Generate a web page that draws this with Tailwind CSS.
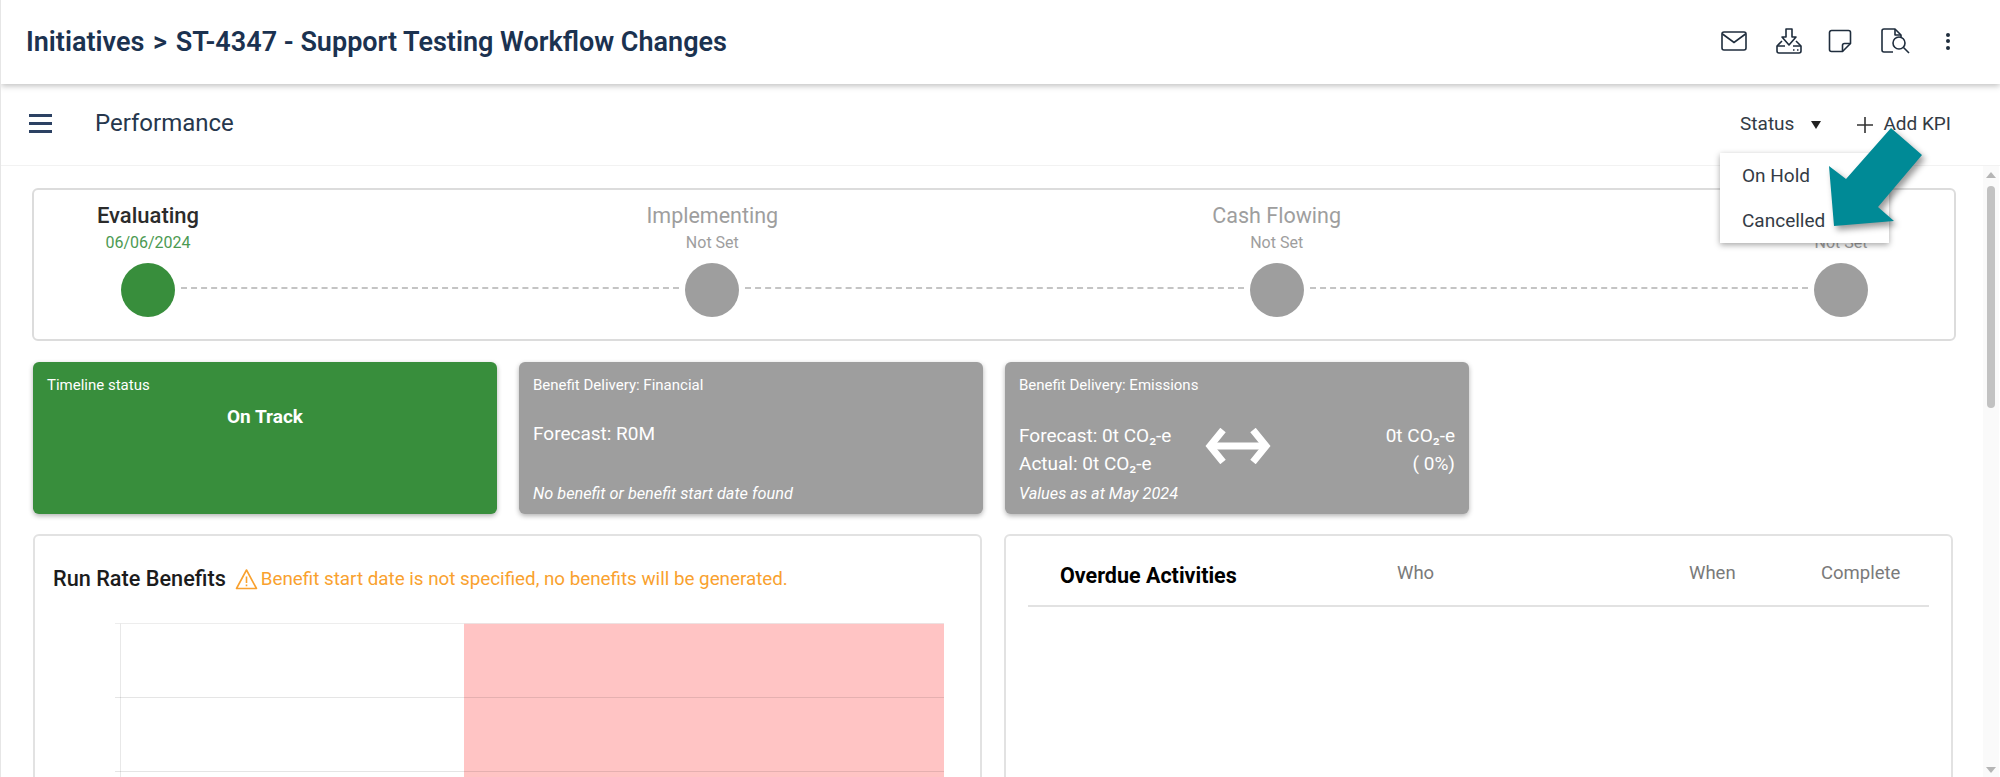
<!DOCTYPE html>
<html>
<head>
<meta charset="utf-8">
<script src="https://cdn.jsdelivr.net/npm/@tailwindcss/browser@4"></script>
</head>
<body class="bg-white overflow-hidden font-['Roboto',sans-serif]">
<div class="relative w-[2000px] h-[777px] overflow-hidden flex flex-col border-l border-[#e6e6e6]">
  <!-- header -->
  <header class="h-[84px] shrink-0 bg-white flex items-center justify-between pl-[25px] pr-[50px] shadow-[0_2px_6px_rgba(0,0,0,0.25)] relative z-10">
    <h1 class="text-[27px] font-semibold text-[#1b3250] mt-[1px]">Initiatives <span class="mx-[2px]">&gt;</span> ST-4347 - Support Testing Workflow Changes</h1>
    <div class="flex items-center text-[#1f2d3d] mb-[2px]">
      <svg class="w-[26px] h-[20px] mr-[28px]" viewBox="0 0 26 20" fill="none" stroke="currentColor" stroke-width="1.6"><rect x="1" y="1" width="24" height="18" rx="2"/><path d="M1.5 3 13 11.5 24.5 3"/></svg>
      <svg class="w-[28px] h-[26px] mr-[25px]" viewBox="0 0 28 26" fill="none" stroke="currentColor" stroke-width="1.6" stroke-linejoin="round"><path d="M11 1h6v8h4l-7 8-7-8h4z"/><path d="M7 13 2 18v5a2 2 0 0 0 2 2h20a2 2 0 0 0 2-2v-5l-5-5"/><path d="M2 18h8M18 18h8"/><path d="M18 22h1.5M22 22h1.5"/></svg>
      <svg class="w-[24px] h-[24px] mr-[29px]" viewBox="0 0 24 24" fill="none" stroke="currentColor" stroke-width="1.6" stroke-linejoin="round"><path d="M3.5 1.5h17a2 2 0 0 1 2 2v11l-8 8h-11a2 2 0 0 1-2-2v-17a2 2 0 0 1 2-2z"/><path d="M22.5 14.5h-6a2 2 0 0 0-2 2v6"/></svg>
      <svg class="w-[29px] h-[26px] mr-[36px]" viewBox="0 0 29 26" fill="none" stroke="currentColor" stroke-width="1.6" stroke-linejoin="round"><path d="M12 24H3a2 2 0 0 1-2-2V3a2 2 0 0 1 2-2h11l6 6v2"/><path d="M14 1v6h6"/><circle cx="18" cy="15" r="6"/><path d="m22.5 19.5 5.5 5.5"/></svg>
      <div class="flex flex-col gap-[2.5px]"><span class="w-[4px] h-[4px] rounded-full bg-[#1f2d3d]"></span><span class="w-[4px] h-[4px] rounded-full bg-[#1f2d3d]"></span><span class="w-[4px] h-[4px] rounded-full bg-[#1f2d3d]"></span></div>
    </div>
  </header>

  <!-- sub header -->
  <div class="h-[82px] shrink-0 flex items-center justify-between pl-[28px] pr-[49px] border-b border-[#f2f2f2] bg-white">
    <div class="flex items-center">
      <div class="w-[23px] flex flex-col gap-[5px] mb-[3px]"><span class="h-[3px] bg-[#2c4163]"></span><span class="h-[3px] bg-[#2c4163]"></span><span class="h-[3px] bg-[#2c4163]"></span></div>
      <span class="ml-[43px] text-[24px] text-[#26374d] mb-[4px]">Performance</span>
    </div>
    <div class="flex items-center text-[19px] text-[#333b45]">
      <span>Status</span>
      <span class="ml-[17px] w-0 h-0 border-x-[5.5px] border-x-transparent border-t-[8px] border-t-[#222]"></span>
      <svg class="ml-[36px] w-[16px] h-[16px]" viewBox="0 0 16 16" stroke="#333" stroke-width="1.6"><path d="M8 0v16M0 8h16"/></svg>
      <span class="ml-[10px]">Add KPI</span>
    </div>
  </div>

  <!-- body -->
  <div class="flex-1 flex min-h-0">
    <main class="flex-1 min-w-0 pl-[31px] pr-[27px] pt-[22px] overflow-hidden flex flex-col">
      <!-- stepper -->
      <section class="h-[153px] shrink-0 rounded-[6px] border-2 border-[#dcdcdc] pl-[87px] pr-[86px] pt-[14px] flex items-start bg-white">
        <div class="w-[54px] flex flex-col items-center whitespace-nowrap">
          <div class="h-[24px] leading-[24px] text-[22px] font-medium text-[#2b2b2b]">Evaluating</div>
          <div class="mt-[6px] h-[18px] leading-[18px] text-[16px] text-[#4c9a52]">06/06/2024</div>
          <div class="mt-[11px] w-[54px] h-[54px] rounded-full bg-[#388e3c]"></div>
        </div>
        <div class="flex-1 mt-[83px] mx-[6px] border-t-2 border-dashed border-[#c4c4c4]"></div>
        <div class="w-[54px] flex flex-col items-center whitespace-nowrap">
          <div class="h-[24px] leading-[24px] text-[21.5px] text-[#9e9e9e]">Implementing</div>
          <div class="mt-[6px] h-[18px] leading-[18px] text-[16px] text-[#9e9e9e]">Not Set</div>
          <div class="mt-[11px] w-[54px] h-[54px] rounded-full bg-[#9e9e9e]"></div>
        </div>
        <div class="flex-1 mt-[83px] mx-[6px] border-t-2 border-dashed border-[#c4c4c4]"></div>
        <div class="w-[54px] flex flex-col items-center whitespace-nowrap">
          <div class="h-[24px] leading-[24px] text-[21.5px] text-[#9e9e9e]">Cash Flowing</div>
          <div class="mt-[6px] h-[18px] leading-[18px] text-[16px] text-[#9e9e9e]">Not Set</div>
          <div class="mt-[11px] w-[54px] h-[54px] rounded-full bg-[#9e9e9e]"></div>
        </div>
        <div class="flex-1 mt-[83px] mx-[6px] border-t-2 border-dashed border-[#c4c4c4]"></div>
        <div class="w-[54px] flex flex-col items-center whitespace-nowrap">
          <div class="h-[24px]"></div>
          <div class="mt-[6px] h-[18px] leading-[18px] text-[16px] text-[#9e9e9e]">Not Set</div>
          <div class="mt-[11px] w-[54px] h-[54px] rounded-full bg-[#9e9e9e]"></div>
        </div>
      </section>

      <!-- status cards -->
      <div class="mt-[21px] ml-[1px] shrink-0 flex gap-[22px] text-white">
        <div class="w-[464px] h-[152px] rounded-[6px] bg-[#388e3c] shadow-[0_2px_5px_rgba(0,0,0,0.3)] px-[14px] pt-[14px]">
          <div class="text-[15px] leading-[18px]">Timeline status</div>
          <div class="mt-[11px] text-center text-[19px] leading-[24px] font-bold">On Track</div>
        </div>
        <div class="w-[464px] h-[152px] rounded-[6px] bg-[#9e9e9e] shadow-[0_2px_5px_rgba(0,0,0,0.3)] px-[14px] pt-[14px] flex flex-col">
          <div class="text-[15px] leading-[18px]">Benefit Delivery: Financial</div>
          <div class="mt-[28px] text-[19px] leading-[24px]">Forecast: R0M</div>
          <div class="mt-auto mb-[11px] text-[16.3px] leading-[18px] italic">No benefit or benefit start date found</div>
        </div>
        <div class="w-[464px] h-[152px] rounded-[6px] bg-[#9e9e9e] shadow-[0_2px_5px_rgba(0,0,0,0.3)] px-[14px] pt-[14px] flex flex-col">
          <div class="text-[15px] leading-[18px]">Benefit Delivery: Emissions</div>
          <div class="mt-[28px] flex items-center">
            <div class="w-[186px] text-[19px] leading-[28px]">
              <div>Forecast: 0t CO₂-e</div>
              <div>Actual: 0t CO₂-e</div>
            </div>
            <svg class="w-[66px] h-[36px] mb-[8px]" viewBox="0 0 66 36" fill="none" stroke="#fff" stroke-width="7"><path d="M5 18h56"/><path d="M18 2 5 18l13 16M48 2l13 16-13 16"/></svg>
            <div class="flex-1 text-right text-[19px] leading-[28px]">
              <div>0t CO₂-e</div>
              <div>( 0%)</div>
            </div>
          </div>
          <div class="mt-auto mb-[11px] text-[16.3px] leading-[18px] italic">Values as at May 2024</div>
        </div>
      </div>

      <!-- panels -->
      <div class="mt-[20px] ml-[1px] flex-1 min-h-0 flex gap-[22px]">
        <section class="w-[949px] shrink-0 h-[300px] rounded-[6px] border-2 border-[#e2e2e2] bg-white pl-[18px] pt-[29px]">
          <div class="flex items-center h-[28px]">
            <span class="text-[21.7px] font-medium text-[#1c1c1c]">Run Rate Benefits</span>
            <svg class="ml-[9px] w-[23px] h-[22px]" viewBox="0 0 23 22" fill="none" stroke="#f9a12e" stroke-width="1.6" stroke-linejoin="round"><path d="M11.5 2 1.5 20.5h20z"/><path d="M11.5 8.5v6.5M11.5 16.5v1.8"/></svg>
            <span class="ml-[3px] text-[18.8px] text-[#f9a12e]">Benefit start date is not specified, no benefits will be generated.</span>
          </div>
          <div class="relative mt-[30px] ml-[62px] w-[829px] h-[200px]">
            <div class="absolute inset-y-0 left-[5px] w-[1px] bg-[#e8e8e8]"></div>
            <div class="absolute top-0 bottom-0 left-[349px] right-0 bg-[#ff9c9c]/60"></div>
            <div class="absolute top-0 inset-x-0 h-[1px] bg-[#e8e8e8]/80"></div>
            <div class="absolute top-[74px] inset-x-0 h-[1px] bg-black/10"></div>
            <div class="absolute top-[148px] inset-x-0 h-[1px] bg-black/10"></div>
          </div>
        </section>
        <section class="w-[949px] shrink-0 h-[300px] rounded-[6px] border-2 border-[#e2e2e2] bg-white px-[22px]">
          <div class="h-[71px] border-b-2 border-[#e2e2e2] relative">
            <span class="absolute left-[32px] top-[26px] text-[21.5px] leading-[28px] font-bold text-black">Overdue Activities</span>
            <span class="absolute left-[369px] top-[25px] text-[18.5px] leading-[24px] text-[#7a7a7a]">Who</span>
            <span class="absolute left-[661px] top-[25px] text-[18.5px] leading-[24px] text-[#7a7a7a]">When</span>
            <span class="absolute left-[793px] top-[25px] text-[18.5px] leading-[24px] text-[#7a7a7a]">Complete</span>
          </div>
        </section>
      </div>
    </main>
    <!-- scrollbar -->
    <div class="w-[16px] shrink-0 mr-[1px] bg-[#fafafa] flex flex-col items-center pt-[6px]">
      <span class="w-0 h-0 border-x-[5px] border-x-transparent border-b-[6px] border-b-[#b5b5b5]"></span>
      <span class="mt-[8px] w-[8px] h-[222px] rounded-full bg-[#c2c2c2]"></span>
      <span class="mt-auto mb-[4px] w-0 h-0 border-x-[5px] border-x-transparent border-t-[6px] border-t-[#b5b5b5]"></span>
    </div>
  </div>

  <!-- dropdown -->
  <div class="absolute left-[1719px] top-[153px] w-[169px] h-[90px] bg-white shadow-[0_2px_6px_rgba(0,0,0,0.35)] z-20 text-[19px] text-[#333b45] pl-[22px]">
    <div class="h-[45px] leading-[45px]">On Hold</div>
    <div class="h-[45px] leading-[45px]">Cancelled</div>
  </div>
  <!-- annotation arrow -->
  <svg class="absolute left-[1819px] top-[124px] z-30 w-[110px] h-[112px] drop-shadow-[3px_4px_3px_rgba(0,0,0,0.4)]" viewBox="0 0 110 112" fill="#008a96"><path d="M71 4 102 31 58 83 74 97 14 102 9 42 26 55z"/></svg>
</div>
</body>
</html>
